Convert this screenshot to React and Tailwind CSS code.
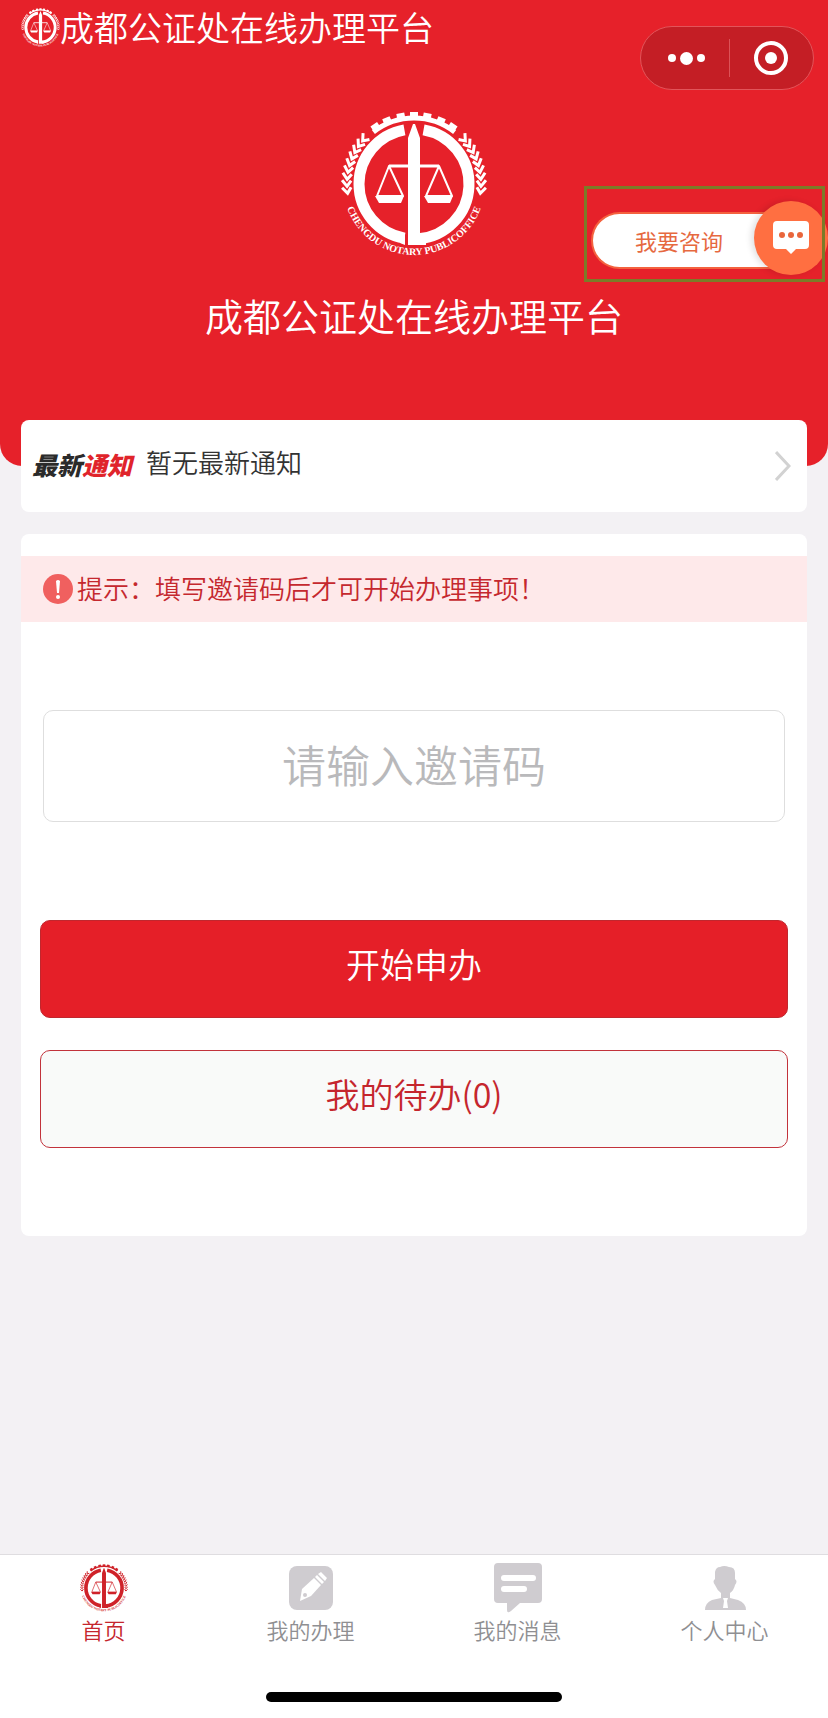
import { useState } from "react"

const polar = (radius, degrees) => {
  const rad = (degrees * Math.PI) / 180
  return [72 + radius * Math.sin(rad), 72 - radius * Math.cos(rad)]
}

const arc = (radius, from, to) => {
  const [x1, y1] = polar(radius, from)
  const [x2, y2] = polar(radius, to)
  const large = Math.abs(to - from) > 180 ? 1 : 0
  const sweep = to > from ? 1 : 0
  return `M${x1} ${y1}A${radius} ${radius} 0 ${large} ${sweep} ${x2} ${y2}`
}

const teeth = [-34, -23, -11, 0, 11, 23, 34]
const leaves = [50, 56, 62, 68, 74, 80, 86, 92, 98]

function Laurel() {
  return (
    <g stroke="currentColor" strokeWidth="3" fill="none">
      {leaves.map((angle) => {
        const [x, y] = polar(67, angle)
        const [ox, oy] = polar(72, angle - 5)
        const [ix, iy] = polar(63, angle - 5)
        return <path key={angle} d={`M${ox} ${oy}L${x} ${y}L${ix} ${iy}`} />
      })}
    </g>
  )
}

function Emblem({ id, className }) {
  return (
    <svg viewBox="-1 -1 146 146" className={className} fill="none" aria-hidden="true">
      <path d={arc(66, -38, 38)} stroke="currentColor" strokeWidth="5" />
      {teeth.map((angle) => (
        <path key={angle} d="M68 7V0H76V7Z" fill="currentColor" transform={`rotate(${angle} 72 72)`} />
      ))}
      <Laurel />
      <g transform="matrix(-1 0 0 1 144 0)">
        <Laurel />
      </g>
      <path d={arc(55, 10, 175)} stroke="currentColor" strokeWidth="11" />
      <path d={arc(55, -170, -10)} stroke="currentColor" strokeWidth="11" />
      <path d="M63 121V133L58 131V121Z" fill="currentColor" />
      <path d="M66 26L71 12H73L78 26V122H84V133H66Z" fill="currentColor" />
      <g stroke="currentColor" strokeWidth="3" strokeLinejoin="round">
        <path d="M47 54H97" />
        <path d="M47 54L35 84H61Z" strokeWidth="2" />
        <path d="M97 54L84 84H110Z" strokeWidth="2" />
      </g>
      <path d="M33 84H62L59 91H37Z" fill="currentColor" />
      <path d="M82 84H111L108 91H86Z" fill="currentColor" />
      <path id={id} d={arc(71, 270, 90)} />
      <text
        className="font-['Liberation_Serif',serif] text-[10px] font-bold"
        fill="currentColor"
        textAnchor="middle"
      >
        <textPath href={`#${id}`} startOffset="50%">CHENGDU NOTARY PUBLICOFFICE</textPath>
      </text>
    </svg>
  )
}

function EditIcon() {
  return (
    <svg viewBox="0 0 48 48" className="h-12 w-12" aria-hidden="true">
      <rect x="2" y="2" width="44" height="44" rx="8" fill="#cfccd0" />
      <path d="M13 37L15 25L27 14L34 21L24 32Z" fill="#fff" />
      <path d="M28 13L30 11L37 18L35 20ZM31 10L34 8L40 14L38 17Z" fill="#fff" />
      <circle cx="18" cy="31" r="2" fill="#cfccd0" />
    </svg>
  )
}

function MessageIcon() {
  return (
    <svg viewBox="0 0 50 50" className="h-[50px] w-[50px]" aria-hidden="true">
      <path d="M5 0H45Q49 0 49 4V36Q49 40 45 40H27L18 48Q14 51 14 47V40H5Q1 40 1 36V4Q1 0 5 0Z" fill="#cfccd0" />
      <path d="M11 15H40M11 26H31" stroke="#fff" strokeWidth="6" strokeLinecap="round" />
    </svg>
  )
}

function PersonIcon() {
  return (
    <svg viewBox="0 0 48 48" className="h-12 w-12" aria-hidden="true">
      <path
        d="M14 8Q15 3 19 3Q23 1 28 3Q34 3 34 9V15Q37 17 34 21Q33 26 29 29V34L37 36Q45 39 45 46H4Q4 39 11 36L20 34V29Q16 26 14 21Q11 17 14 15Z"
        fill="#cfccd0"
      />
      <path d="M22 34H27L26 37L27 44H22L23 37Z" fill="#fff" />
    </svg>
  )
}

const tabs = [
  { label: "首页", icon: <Emblem id="tab-emblem" className="h-12 w-12 text-[#cf2229]" />, active: true },
  { label: "我的办理", icon: <EditIcon /> },
  { label: "我的消息", icon: <MessageIcon /> },
  { label: "个人中心", icon: <PersonIcon /> },
]

function Capsule() {
  return (
    <div className="absolute top-[26px] right-[14px] flex h-16 w-[174px] items-center rounded-full border border-[#e2555a] bg-[#c41e25]">
      <button type="button" aria-label="更多" className="flex h-full flex-1 items-center justify-center gap-1 pl-1">
        <span className="h-2 w-2 rounded-full bg-white" />
        <span className="h-[13px] w-[13px] rounded-full bg-white" />
        <span className="h-2 w-2 rounded-full bg-white" />
      </button>
      <span className="h-[38px] w-px bg-[#dc5257]" />
      <button type="button" aria-label="关闭" className="flex h-full flex-1 items-center justify-center">
        <span className="flex h-[34px] w-[34px] items-center justify-center rounded-full border-4 border-white">
          <span className="h-3 w-3 rounded-full bg-white" />
        </span>
      </button>
    </div>
  )
}

function ConsultButton() {
  return (
    <>
      <button type="button" className="absolute top-[201px] right-0 flex h-[74px] w-[237px] items-center">
        <span className="mt-1 flex h-[57px] w-[200px] items-center rounded-l-full border-2 border-r-0 border-[#f4623f] bg-white pl-[42px] text-[22px] font-normal text-[#e6693f]">
          我要咨询
        </span>
        <span className="absolute right-0 flex h-[74px] w-[74px] items-center justify-center rounded-full bg-[#ff6f41] shadow-[-3px_0_6px_rgba(0,0,0,0.12)]">
          <svg viewBox="0 0 36 34" className="h-[34px] w-9" aria-hidden="true">
            <path d="M4 0H32Q36 0 36 4V24Q36 28 32 28H23L18 33L13 28H4Q0 28 0 24V4Q0 0 4 0Z" fill="#fff" />
            <g fill="#e9663c">
              <circle cx="9" cy="14" r="3" />
              <circle cx="18" cy="14" r="3" />
              <circle cx="27" cy="14" r="3" />
            </g>
          </svg>
        </span>
      </button>
      <div className="pointer-events-none absolute top-[186px] right-[3px] h-[96px] w-[241px] border-3 border-[#7c7b28]" />
    </>
  )
}

export default function App() {
  const [code, setCode] = useState("")

  return (
    <div className="relative flex min-h-screen flex-col bg-[#f3f1f4] font-['Noto_Sans_CJK_SC',sans-serif] font-[350]">
      <header className="rounded-b-[22px] bg-[#e6212a] pb-[122px] text-white">
        <div className="flex h-[54px] items-center pl-[21px]">
          <Emblem id="bar-emblem" className="h-[39px] w-[39px]" />
          <span className="text-[34px] leading-[54px]">成都公证处在线办理平台</span>
        </div>
        <div className="flex flex-col items-center pt-[57px]">
          <Emblem id="main-emblem" className="h-[146px] w-[146px]" />
          <h1 className="mt-[29px] text-[38px] leading-[58px]">成都公证处在线办理平台</h1>
        </div>
      </header>
      <Capsule />
      <ConsultButton />

      <main className="-mt-[46px] flex flex-col gap-[22px] px-[21px]">
        <a href="#notice" className="flex h-[92px] items-center rounded-lg bg-white pr-4 pl-[11px] text-[#333]">
          <span className="pb-1 text-[25px] leading-[38px] font-black text-[#2b2b2b] italic">
            最新<span className="text-[#e0242b]">通知</span>
          </span>
          <span className="ml-[14px] pb-2 text-[26px] leading-[38px]">暂无最新通知</span>
          <svg viewBox="0 0 16 30" className="ml-auto h-[30px] w-4" aria-hidden="true">
            <path d="M1 1L14 15L1 29" fill="none" stroke="#d2d2d2" strokeWidth="3" />
          </svg>
        </a>

        <section className="rounded-lg bg-white pt-[22px] pb-[88px]">
          <div className="flex h-[66px] items-center bg-[#fee9ea] pl-[22px] text-[26px] leading-[38px] text-[#c5282e]">
            <svg viewBox="0 0 30 30" className="mr-1 h-[30px] w-[30px]" aria-hidden="true">
              <circle cx="15" cy="15" r="15" fill="#f0605f" />
              <path d="M13 7Q15 5 17 7L16 19H14Z" fill="#fff" />
              <circle cx="15" cy="23" r="2" fill="#fff" />
            </svg>
            <span className="pb-0.5">提示：填写邀请码后才可开始办理事项！</span>
          </div>
          <form onSubmit={(e) => e.preventDefault()}>
            <div className="px-[22px] pt-[88px]">
              <input
                type="text"
                aria-label="邀请码"
                placeholder="请输入邀请码"
                value={code}
                onChange={(e) => setCode(e.target.value)}
                className="h-[112px] w-full rounded-[10px] border border-[#dedede] pb-1 text-center text-[44px] text-[#333] placeholder:text-[#b9b9bb]"
              />
            </div>
            <div className="flex flex-col gap-8 px-[19px] pt-[98px]">
              <button
                type="submit"
                className="h-[98px] rounded-[10px] border border-[#c0272e] bg-[#e51f28] pb-3 text-[34px] text-white"
              >
                开始申办
              </button>
              <button
                type="button"
                className="h-[98px] rounded-[10px] border border-[#c2323b] bg-[#f9faf9] pb-3 text-[34px] text-[#c5262d]"
              >
                我的待办(0)
              </button>
            </div>
          </form>
        </section>
      </main>

      <footer className="mt-auto border-t border-[#dfdde0] bg-white pb-4">
        <nav className="grid grid-cols-4">
          {tabs.map((tab) => (
            <a key={tab.label} href="#tab" className="flex flex-col items-center pt-1.5">
              <span className="flex h-[54px] items-center">{tab.icon}</span>
              <span className={tab.active ? "text-[22px] leading-7 text-[#c5262d]" : "text-[22px] leading-7 text-[#8f8f92]"}>
                {tab.label}
              </span>
            </a>
          ))}
        </nav>
        <div className="mx-auto mt-[49px] h-[10px] w-[296px] rounded-full bg-black" />
      </footer>
    </div>
  )
}
